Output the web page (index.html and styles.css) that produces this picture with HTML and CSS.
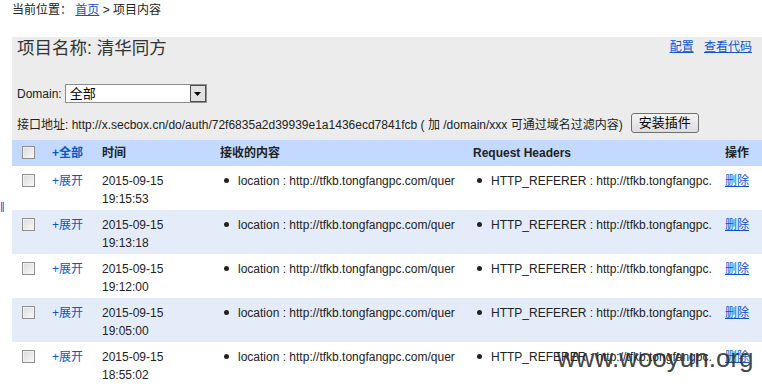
FILE: index.html
```html
<!DOCTYPE html>
<html lang="zh-CN">
<head>
    <meta charset="UTF-8">
    <meta name="viewport" content="width=device-width, initial-scale=1.0">
    <title>项目内容</title>
    <link rel="stylesheet" href="styles.css">
</head>
<body>
    <div class="crumb">当前位置： <a href="#">首页</a> &gt; 项目内容</div>
    <a class="side-mark" href="#">||</a>

    <div class="panel">
        <div class="panel-head">
            <h2>项目名称: 清华同方</h2>
            <div class="head-links">
                <a href="#">配置</a>
                <a href="#">查看代码</a>
            </div>
        </div>

        <div class="domain-row">
            <span>Domain:</span>
            <div class="select">
                <span class="select-value">全部</span>
                <span class="select-arrow">
                    <svg width="7" height="4" viewBox="0 0 7 4"><path d="M0 0H7L3.5 4Z" fill="#000"/></svg>
                </span>
            </div>
        </div>

        <div class="api-row">
            <span>接口地址: http://x.secbox.cn/do/auth/72f6835a2d39939e1a1436ecd7841fcb ( 加 /domain/xxx 可通过域名过滤内容)</span>
            <button type="button" class="btn">安装插件</button>
        </div>

        <table class="records">
            <colgroup>
                <col style="width:34px">
                <col style="width:50px">
                <col style="width:118px">
                <col style="width:253px">
                <col style="width:252px">
                <col>
            </colgroup>
            <tr>
                <th class="chk"><input type="checkbox"></th>
                <th><a class="plain" href="#">+全部</a></th>
                <th>时间</th>
                <th>接收的内容</th>
                <th>Request Headers</th>
                <th>操作</th>
            </tr>
            <tr>
                <td class="chk"><input type="checkbox"></td>
                <td><a class="plain" href="#">+展开</a></td>
                <td>2015-09-15<br>19:15:53</td>
                <td><ul><li>location : http://tfkb.tongfangpc.com/quer</li></ul></td>
                <td><ul><li>HTTP_REFERER : http://tfkb.tongfangpc.</li></ul></td>
                <td><a href="#">删除</a></td>
            </tr>
            <tr class="alt">
                <td class="chk"><input type="checkbox"></td>
                <td><a class="plain" href="#">+展开</a></td>
                <td>2015-09-15<br>19:13:18</td>
                <td><ul><li>location : http://tfkb.tongfangpc.com/quer</li></ul></td>
                <td><ul><li>HTTP_REFERER : http://tfkb.tongfangpc.</li></ul></td>
                <td><a href="#">删除</a></td>
            </tr>
            <tr>
                <td class="chk"><input type="checkbox"></td>
                <td><a class="plain" href="#">+展开</a></td>
                <td>2015-09-15<br>19:12:00</td>
                <td><ul><li>location : http://tfkb.tongfangpc.com/quer</li></ul></td>
                <td><ul><li>HTTP_REFERER : http://tfkb.tongfangpc.</li></ul></td>
                <td><a href="#">删除</a></td>
            </tr>
            <tr class="alt">
                <td class="chk"><input type="checkbox"></td>
                <td><a class="plain" href="#">+展开</a></td>
                <td>2015-09-15<br>19:05:00</td>
                <td><ul><li>location : http://tfkb.tongfangpc.com/quer</li></ul></td>
                <td><ul><li>HTTP_REFERER : http://tfkb.tongfangpc.</li></ul></td>
                <td><a href="#">删除</a></td>
            </tr>
            <tr>
                <td class="chk"><input type="checkbox"></td>
                <td><a class="plain" href="#">+展开</a></td>
                <td>2015-09-15<br>18:55:02</td>
                <td><ul><li>location : http://tfkb.tongfangpc.com/quer</li></ul></td>
                <td><ul><li>HTTP_REFERER : http://tfkb.tongfangpc.</li></ul></td>
                <td><a href="#">删除</a></td>
            </tr>
        </table>
    </div>

    <div class="watermark">www.wooyun.org</div>
</body>
</html>
```

FILE: styles.css
```css
body {
    margin: 0;
    padding: 2px 0 0 12px;
    font-family: "Liberation Sans", Arial, "Noto Sans CJK SC", sans-serif;
    font-size: 12px;
    color: #222;
    overflow: hidden;
}
a {
    color: #0b57c9;
}
a.plain {
    text-decoration: none;
}
.crumb {
    line-height: 16px;
    margin-bottom: 19px;
}
.side-mark {
    position: absolute;
    left: 0;
    top: 200px;
    font-size: 11px;
    letter-spacing: -1px;
    color: #0b57c9;
}
.panel {
    background: #ececec;
}
.panel-head {
    display: flex;
    justify-content: space-between;
    align-items: flex-start;
    padding: 0 10px 0 5px;
}
.panel-head h2 {
    margin: 0;
    font-size: 17.5px;
    font-weight: normal;
    line-height: 22px;
    color: #333;
}
.head-links {
    padding-top: 3px;
    line-height: 14px;
}
.head-links a {
    margin-left: 7px;
}
.domain-row {
    display: flex;
    align-items: center;
    gap: 3px;
    margin-top: 25px;
    padding-left: 5px;
}
.select {
    display: flex;
    width: 142px;
    height: 19px;
    box-sizing: border-box;
    border: 1px solid #8c8c8c;
    background: #fff;
}
.select-value {
    flex: 1;
    padding-left: 4px;
    font-size: 13px;
    line-height: 17px;
    color: #000;
}
.select-arrow {
    display: flex;
    align-items: center;
    justify-content: center;
    width: 16px;
    box-sizing: border-box;
    border: 1px solid #505050;
    background: #e2e2e2;
}
.api-row {
    display: flex;
    align-items: center;
    margin-top: 10px;
    padding-left: 5px;
}
.btn {
    margin-left: 8px;
    height: 20px;
    padding: 0 7px;
    border: 1px solid #707070;
    border-radius: 3px;
    background: linear-gradient(#f4f4f4, #dcdcdc);
    font-family: "Liberation Sans", "Noto Sans CJK SC", sans-serif;
    font-size: 13px;
    line-height: 18px;
    color: #000;
}
.records {
    width: 100%;
    margin-top: 7px;
    border-collapse: collapse;
    table-layout: fixed;
    background: #fff;
}
.records th,
.records td {
    padding: 6px 6px 2px;
    text-align: left;
    vertical-align: top;
    line-height: 18px;
    white-space: nowrap;
}
.records th {
    padding: 4px 6px;
    background: #c3d9ff;
}
.records tr.alt td {
    background: #e5ecf9;
}
.records .chk {
    padding-left: 10px;
    padding-right: 0;
}
.records input[type="checkbox"] {
    appearance: none;
    width: 13px;
    height: 13px;
    margin: 0;
    vertical-align: -2px;
    border: 1px solid #8f8f8f;
    background: linear-gradient(135deg, #dcdcdc, #f7f7f7);
    box-shadow: inset 0 0 0 1px #f2f2f2;
}
.records ul {
    margin: 0;
    padding: 0;
}
.records li {
    list-style: none;
}
.records li::before {
    content: "";
    display: inline-block;
    width: 5px;
    height: 5px;
    border-radius: 50%;
    background: #222;
    margin: 0 9px 2px 4px;
    vertical-align: middle;
}
.watermark {
    position: absolute;
    left: 557px;
    top: 345px;
    font-size: 26px;
    line-height: 26px;
    color: rgba(45, 45, 45, 0.9);
}
```
